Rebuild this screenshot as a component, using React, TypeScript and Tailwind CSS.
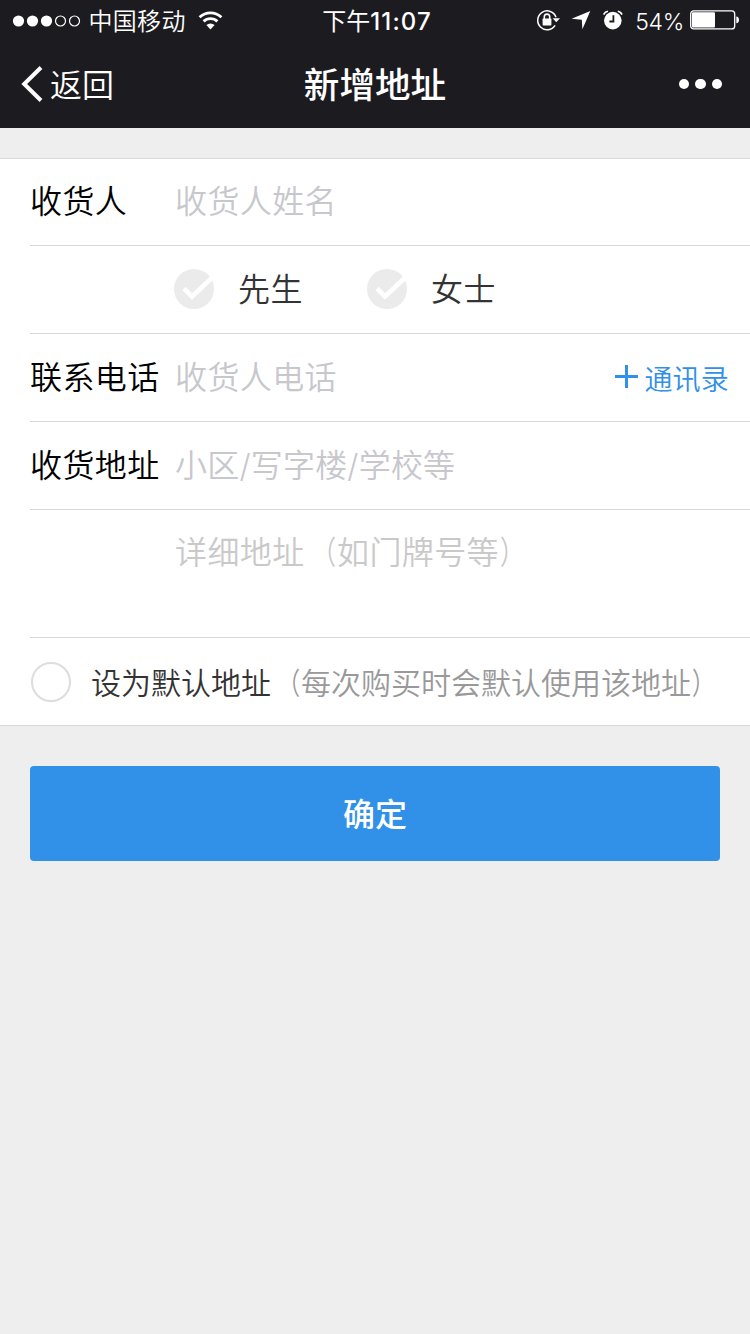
import type { ReactNode } from 'react';

function StatusBar() {
  return (
    <div className="grid h-10 grid-cols-[1fr_auto_1fr] items-center text-2xl leading-10">
      <div className="flex items-center pl-3">
        <svg width="70" height="14" viewBox="0 0 70 14" fill="white" className="-mt-px">
          <circle cx="6.5" cy="7" r="5.6" />
          <circle cx="20.5" cy="7" r="5.6" />
          <circle cx="34.5" cy="7" r="5.6" />
          <circle cx="48.5" cy="7" r="5" fill="none" stroke="white" strokeWidth="1.2" />
          <circle cx="62.5" cy="7" r="5" fill="none" stroke="white" strokeWidth="1.2" />
        </svg>
        <span className="mt-0.5 ml-[6.5px] font-[350] tracking-[0.3px]">中国移动</span>
        <svg width="26" height="20" viewBox="0 0 26 20" fill="none" stroke="white" className="-mt-0.5 ml-3">
          <path d="M1.6 7.2a16 16 0 0 1 21.8 0" strokeWidth="2.9" />
          <path d="M5.6 11.4a10 10 0 0 1 13.8 0" strokeWidth="2.9" />
          <path d="M12.5 19.4 8.4 15a6 6 0 0 1 8.2 0z" fill="white" stroke="none" />
        </svg>
      </div>
      <span className="mt-0.5 ml-1 font-medium">
        <span className="font-normal">下午</span>
        <span className="tracking-[1.1px]">11:07</span>
      </span>
      <div className="flex items-center justify-end pr-[10px]">
        <svg width="26" height="22" viewBox="0 0 26 22" className="-mt-0.5 mr-[9px]">
          <path d="M19.1 16.3A9.4 9.4 0 1 1 20 8.2" fill="none" stroke="white" strokeWidth="1.5" />
          <path d="M16.6 9.2h7.4l-3.7 4z" fill="white" />
          <rect x="6.6" y="9.6" width="8.8" height="6.8" rx=".7" fill="white" />
          <path d="M8.3 10V7.8a2.7 2.7 0 0 1 5.4 0V10" fill="none" stroke="white" strokeWidth="1.6" />
        </svg>
        <svg width="20" height="20" viewBox="0 0 20 20" fill="white" className="-mt-0.5 mr-3">
          <path d="M19.3 1 11.4 19.2 10.8 9.8.6 8.8z" />
        </svg>
        <svg width="20" height="20" viewBox="0 0 20 20" className="-mt-0.5 mr-[12px]">
          <circle cx="9.8" cy="10.6" r="8.8" fill="white" />
          <path d="M10.4 5.2v6.3H6.4" fill="none" stroke="#1c1b20" strokeWidth="1.8" />
          <path d="M.6 4.6Q1.8 1.6 5 1.2M14.8 1.2q3 .4 4.2 3.4" fill="none" stroke="white" strokeWidth="1.6" />
        </svg>
        <span className="mt-px mr-[6px] text-[23px] font-[350] tracking-[-0.3px]">54%</span>
        <svg width="50" height="20" viewBox="0 0 50 20" className="-mt-0.5">
          <rect x=".7" y=".9" width="44" height="18" rx="3" fill="none" stroke="white" strokeWidth="1.3" />
          <rect x="2" y="2.3" width="23" height="15.2" rx="1" fill="white" />
          <path d="M46.3 6.5q2.7.4 2.7 3.4t-2.7 3.4z" fill="white" />
        </svg>
      </div>
    </div>
  );
}

function NavBar() {
  return (
    <div className="grid h-[88px] grid-cols-[1fr_auto_1fr] items-center">
      <div className="flex items-center pl-[21px]">
        <svg width="22" height="36" viewBox="0 0 22 36" fill="none" stroke="white" strokeWidth="4">
          <path d="M20 1.5 3.2 18 20 34.5" />
        </svg>
        <span className="mt-1 ml-[7px] text-[32px] leading-none font-[350]">返回</span>
      </div>
      <h1 className="mt-1 text-[35.6px] leading-none font-medium">新增地址</h1>
      <div className="flex justify-end gap-[6px] pr-7">
        <i className="size-[10.5px] rounded-full bg-white" />
        <i className="size-[10.5px] rounded-full bg-white" />
        <i className="size-[10.5px] rounded-full bg-white" />
      </div>
    </div>
  );
}

function Row({ label, className, children }: { label?: string; className: string; children: ReactNode }) {
  return (
    <div className={`ml-[30px] flex border-b border-[#d9d9d9] ${className}`}>
      <span className="w-[145px] shrink-0 whitespace-nowrap text-black">{label}</span>
      {children}
    </div>
  );
}

function Option({ text }: { text: string }) {
  return (
    <div className="flex w-[193px] items-center">
      <svg width="40" height="40" viewBox="0 0 40 40" className="-mt-0.5 mr-6 -ml-px">
        <circle cx="20" cy="20" r="20" fill="#ebebeb" />
        <path d="m10 19.5 8 8L38 8.7" fill="none" stroke="white" strokeWidth="4.6" />
      </svg>
      <span className="text-[#333]">{text}</span>
    </div>
  );
}

function Parens({ children }: { children: string }) {
  return (
    <>
      <span className="inline-block origin-right -translate-x-px scale-x-75">（</span>
      {children}
      <span className="inline-block origin-left translate-x-px scale-x-75">）</span>
    </>
  );
}

export default function App() {
  return (
    <div className="min-h-[1334px] w-[750px] bg-[#eee] font-[Inter,'Noto_Sans_CJK_SC',sans-serif]">
      <header className="h-32 bg-[#1c1b20] text-white">
        <StatusBar />
        <NavBar />
      </header>

      <main className="mt-[30px] border-y border-[#d9d9d9] bg-white text-[32px] leading-[48px] font-[350] tracking-[0.4px]">
        <Row label="收货人" className="h-[87px] items-center">
          <span className="text-[#c7c7cd]">收货人姓名</span>
        </Row>
        <Row className="h-[88px] items-center">
          <Option text="先生" />
          <Option text="女士" />
        </Row>
        <Row label="联系电话" className="h-[88px] items-center">
          <span className="text-[#c7c7cd]">收货人电话</span>
          <button className="mr-[21px] ml-auto flex items-center gap-[6px] text-[28px] tracking-[0.2px] text-[#3190e8]">
            <svg width="23" height="23" viewBox="0 0 23 23" fill="none" stroke="currentColor" strokeWidth="3" className="-mt-0.5">
              <path d="M11.5 0v23M0 11.5h23" />
            </svg>
            <span className="mt-1">通讯录</span>
          </button>
        </Row>
        <Row label="收货地址" className="h-[88px] items-center">
          <span className="tracking-[0.2px] text-[#c7c7cd]">小区/写字楼/学校等</span>
        </Row>
        <Row className="h-32 items-start pt-[19px]">
          <span className="text-[#c9c9c9]">
            详细地址<Parens>如门牌号等</Parens>
          </span>
        </Row>
        <label className="flex h-[87px] items-center pl-[31px] text-[30px] tracking-normal whitespace-nowrap text-[#333]">
          <i className="mr-5 size-10 rounded-full border-2 border-[#ddd]" />
          <span className="mt-0.5">
            设为默认地址
            <span className="text-[#999]">
              <Parens>每次购买时会默认使用该地址</Parens>
            </span>
          </span>
        </label>
      </main>

      <button className="mx-[30px] mt-10 flex h-[95px] w-[690px] items-center justify-center rounded bg-[#3190e8] pt-0.5 text-[32px] font-medium text-white">
        确定
      </button>
    </div>
  );
}
